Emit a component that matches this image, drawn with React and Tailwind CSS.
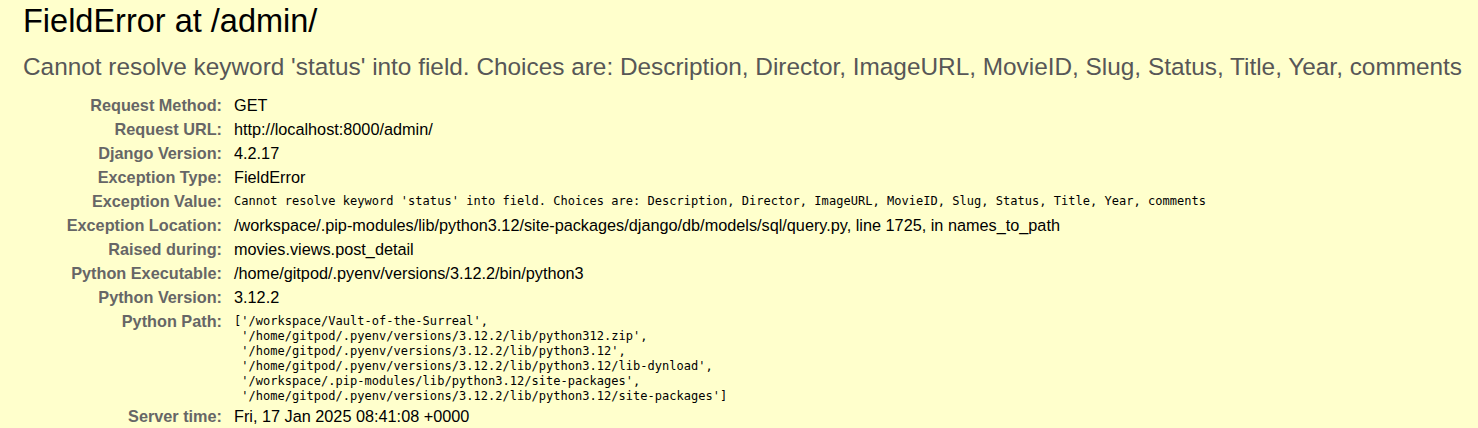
export default function App() {
  const rows = [
    ["Request Method:", "GET"],
    ["Request URL:", "http://localhost:8000/admin/"],
    ["Django Version:", "4.2.17"],
    ["Exception Type:", "FieldError"],
    [
      "Exception Value:",
      "Cannot resolve keyword 'status' into field. Choices are: Description, Director, ImageURL, MovieID, Slug, Status, Title, Year, comments",
      true,
    ],
    [
      "Exception Location:",
      "/workspace/.pip-modules/lib/python3.12/site-packages/django/db/models/sql/query.py, line 1725, in names_to_path",
    ],
    ["Raised during:", "movies.views.post_detail"],
    ["Python Executable:", "/home/gitpod/.pyenv/versions/3.12.2/bin/python3"],
    ["Python Version:", "3.12.2"],
    [
      "Python Path:",
      "['/workspace/Vault-of-the-Surreal',\n '/home/gitpod/.pyenv/versions/3.12.2/lib/python312.zip',\n '/home/gitpod/.pyenv/versions/3.12.2/lib/python3.12',\n '/home/gitpod/.pyenv/versions/3.12.2/lib/python3.12/lib-dynload',\n '/workspace/.pip-modules/lib/python3.12/site-packages',\n '/home/gitpod/.pyenv/versions/3.12.2/lib/python3.12/site-packages']",
      true,
    ],
    ["Server time:", "Fri, 17 Jan 2025 08:41:08 +0000"],
  ];
  return (
    <div
      className="min-h-screen bg-[#ffffcc] pt-[3px] px-[23px] text-black"
      style={{ fontFamily: '"Liberation Sans", Arial, sans-serif' }}
    >
      <h1 className="text-[32.5px] leading-[37px] font-normal">FieldError at /admin/</h1>
      <h2 className="mt-[12.5px] text-[24.375px] leading-[28px] font-normal text-[#575757] whitespace-nowrap">
        Cannot resolve keyword 'status' into field. Choices are: Description, Director, ImageURL, MovieID, Slug, Status, Title, Year, comments
      </h2>
      <div className="mt-[13px] grid grid-cols-[207px_1fr] text-[16.25px] leading-[19px]">
        {rows.map(([label, value, mono]) => (
          <div key={label} className="contents">
            <div className="py-[2.5px] pr-2 text-right font-bold text-[#666666] whitespace-nowrap">
              {label}
            </div>
            <div className="py-[2.5px] pl-1 whitespace-nowrap">
              {mono ? (
                <pre
                  className="pt-[1.5px] mb-[-1.5px] text-[12px] leading-[15px] tracking-[0.03px] whitespace-pre"
                  style={{ fontFamily: '"DejaVu Sans Mono", "Liberation Mono", monospace' }}
                >
                  {value}
                </pre>
              ) : (
                value
              )}
            </div>
          </div>
        ))}
      </div>
    </div>
  );
}
